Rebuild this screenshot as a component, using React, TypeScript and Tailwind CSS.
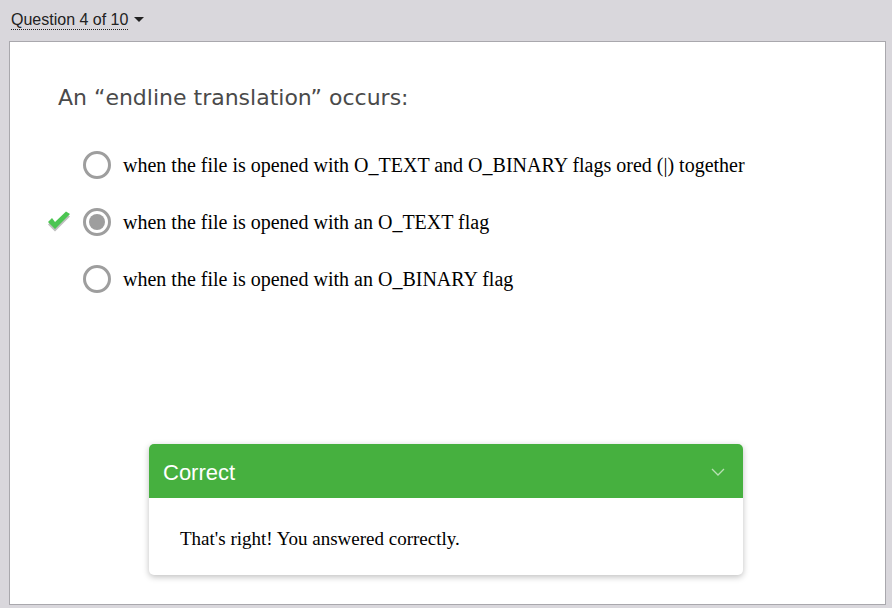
const options = [
  "when the file is opened with O_TEXT and O_BINARY flags ored (|) together",
  "when the file is opened with an O_TEXT flag",
  "when the file is opened with an O_BINARY flag",
];

function Check() {
  return (
    <svg width="26" height="22" viewBox="0 0 26 22">
      <path d="M2 12 L9 19 L24 4 L20 1 L9 12 L6 8 Z" fill="#bfbfbf" transform="translate(0 1.5)" />
      <path d="M2 11 L9 18 L24 3 L20 0.5 L9 11 L6 7 Z" fill="#4cc552" />
    </svg>
  );
}

export default function App() {
  return (
    <div className="h-[608px] w-[892px] bg-[#d9d7dc] font-['Liberation_Sans',sans-serif]">
      <div className="flex h-[41px] items-center pl-[11px]">
        <span className="border-b border-dotted border-[#222] text-[16px] leading-[18px] text-[#222]">
          Question 4 of 10
        </span>
        <span className="ml-[6px] mt-[-2px] h-0 w-0 border-x-[5px] border-t-[5px] border-x-transparent border-t-[#222]" />
      </div>
      <div className="ml-[9px] flex h-[564px] w-[877px] flex-col border border-[#a9a8ad] bg-white">
        <h2 className="mt-[42px] pl-[48px] font-['DejaVu_Sans',sans-serif] text-[22px] leading-[28px] text-[#4a4a4a]">
          An “endline translation” occurs:
        </h2>
        <div className="mt-[39px] flex flex-col gap-[29px]">
          {options.map((text, i) => (
            <div key={text} className="flex h-[28px] items-center">
              <div className="flex w-[73px] justify-end pr-[11px]">
                {i === 1 && <Check />}
              </div>
              <div className="flex h-[28px] w-[28px] items-center justify-center rounded-full border-[3px] border-[#9e9e9e]">
                {i === 1 && <div className="h-[16px] w-[16px] rounded-full bg-[#9e9e9e]" />}
              </div>
              <span className="ml-[12px] font-['Liberation_Serif',serif] text-[20px] text-black">
                {text}
              </span>
            </div>
          ))}
        </div>
        <div className="ml-[139px] mt-[151px] w-[594px] overflow-hidden rounded-[5px] bg-white shadow-[0_2px_6px_rgba(0,0,0,0.25)]">
          <div className="flex h-[54px] items-center justify-between bg-[#46b03f] pl-[14px] pr-[18px] pt-[2px]">
            <span className="text-[22px] text-white">Correct</span>
            <svg width="14" height="10" viewBox="0 0 14 10">
              <path d="M1 2 L7 8 L13 2" fill="none" stroke="#b8e0b4" strokeWidth="1.3" />
            </svg>
          </div>
          <div className="px-[31px] pb-[24px] pt-[29px] font-['Liberation_Serif',serif] text-[19px] leading-[24px] text-black">
            That's right! You answered correctly.
          </div>
        </div>
      </div>
    </div>
  );
}
